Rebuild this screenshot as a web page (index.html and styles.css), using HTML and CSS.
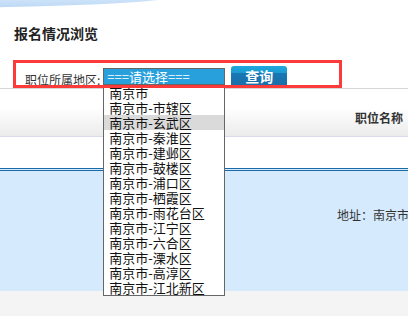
FILE: index.html
```html
<!DOCTYPE html>
<html lang="zh-CN">
<head>
  <meta charset="UTF-8">
  <title>报名情况浏览</title>
  <meta name="viewport" content="width=device-width, initial-scale=1">
  <link rel="stylesheet" href="styles.css">
</head>
<body>
  <div class="top"></div>
  <h2 class="title">报名情况浏览</h2>

  <div class="search">
    <label>职位所属地区:</label>
    <div class="picker">
      <span class="picked">===请选择===</span>
      <ul class="options">
        <li>南京市</li>
        <li>南京市-市辖区</li>
        <li class="hover">南京市-玄武区</li>
        <li>南京市-秦淮区</li>
        <li>南京市-建邺区</li>
        <li>南京市-鼓楼区</li>
        <li>南京市-浦口区</li>
        <li>南京市-栖霞区</li>
        <li>南京市-雨花台区</li>
        <li>南京市-江宁区</li>
        <li>南京市-六合区</li>
        <li>南京市-溧水区</li>
        <li>南京市-高淳区</li>
        <li>南京市-江北新区</li>
      </ul>
    </div>
    <button type="button">查询</button>
  </div>

  <div class="grid">
    <div class="grid-head">职位名称</div>
    <div class="grid-row"></div>
    <div class="grid-line"></div>
    <div class="grid-body">地址：南京市</div>
  </div>
  <div class="footer"></div>
</body>
</html>
```

FILE: styles.css
```css
body {
  margin: 0;
  font-family: "Noto Sans CJK SC", "Liberation Sans", sans-serif;
  color: #333;
  background: #fff;
}
.top {
  height: 25px;
  position: relative;
  overflow: hidden;
}
.top::before {
  content: "";
  position: absolute;
  left: -380px;
  top: -18px;
  width: 560px;
  height: 26px;
  border-radius: 50%;
  background: linear-gradient(#f2f8fe, #bcd8f6);
}
.title {
  margin: 0;
  padding-left: 14px;
  font-size: 14px;
  line-height: 16px;
  font-weight: bold;
  color: #222;
}
.search {
  position: relative;
  margin-top: 19px;
  height: 28px;
  padding-left: 25px;
  display: flex;
  align-items: flex-end;
  border-bottom: 1px solid #d6d6d6;
}
.search::after {
  content: "";
  position: absolute;
  left: 13px;
  top: 0;
  width: 329px;
  height: 28px;
  border: 3px solid #fb3a3a;
  box-sizing: border-box;
  z-index: 2;
}
.search label {
  font-size: 12px;
  line-height: 14px;
  margin-bottom: 1px;
}
.picker {
  position: relative;
  margin-left: 3px;
  margin-bottom: 2px;
  width: 122px;
  height: 18px;
  border: 1px solid #666;
  box-sizing: border-box;
  background: #28a0dc;
}
.picked {
  display: block;
  color: #fff;
  font-size: 13px;
  line-height: 16px;
  padding-left: 3px;
}
.options {
  position: absolute;
  left: -1px;
  top: 15px;
  width: 122px;
  margin: 0;
  padding: 0;
  list-style: none;
  background: #fff;
  border: 1px solid #666;
  box-sizing: border-box;
  z-index: 1;
}
.options li {
  height: 15px;
  line-height: 15px;
  font-size: 13px;
  padding-left: 5px;
  color: #111;
  white-space: nowrap;
}
.options li.hover {
  background: #dadada;
}
.search button {
  margin-left: 6px;
  margin-bottom: 2px;
  width: 56px;
  height: 20px;
  padding: 0;
  border: none;
  border-radius: 3px 3px 0 0;
  background: linear-gradient(#1ea8dc 0, #1b9bd2 33%, #1878b4 36%, #1a6ea8 100%);
  color: #fff;
  font-family: inherit;
  font-size: 14px;
  font-weight: bold;
  line-height: 20px;
  cursor: pointer;
}
.grid-head {
  height: 48px;
  box-sizing: border-box;
  padding: 22px 0 0 355px;
  font-size: 12px;
  line-height: 14px;
  font-weight: bold;
  white-space: nowrap;
  overflow: hidden;
  background: linear-gradient(#fff 40%, #ebebeb);
  border-bottom: 1px solid #dcdaea;
}
.grid-row {
  height: 31px;
}
.grid-line {
  height: 1px;
  background: #d5eafd;
  border-top: 1px solid #1b6aa5;
  border-bottom: 1px solid #1b6aa5;
}
.grid-body {
  height: 120px;
  box-sizing: border-box;
  padding: 37px 0 0 337px;
  font-size: 12px;
  line-height: 14px;
  white-space: nowrap;
  overflow: hidden;
  background: #d5eafd;
}
.footer {
  height: 25px;
  background: #f4f4f4;
}
```
